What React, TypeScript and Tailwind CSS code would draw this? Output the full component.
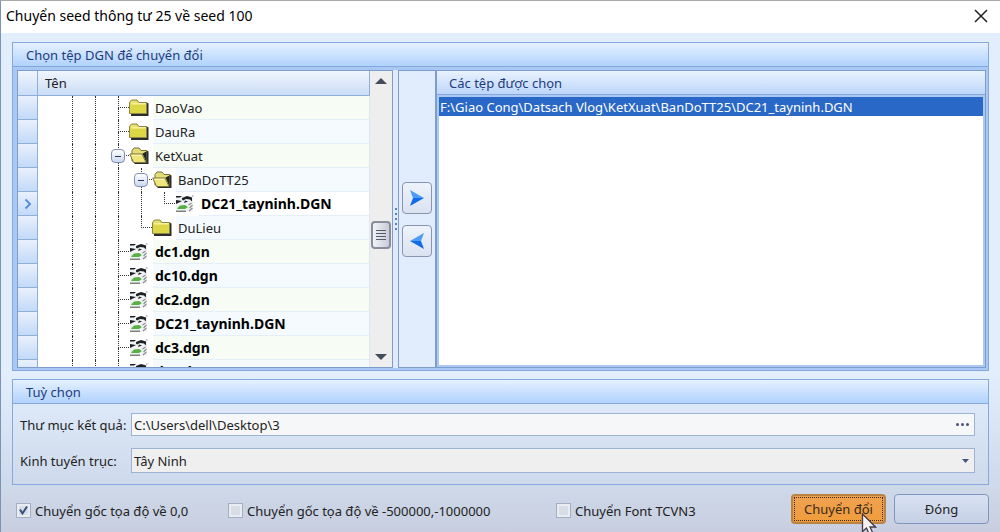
import React from 'react';

interface TreeItem {
    name: string;
    kind: 'folder' | 'open' | 'dgn';
    depth: number;
    joint: 'tee' | 'corner';
    current?: boolean;
}

const items: TreeItem[] = [
    { name: 'DaoVao', kind: 'folder', depth: 2, joint: 'tee' },
    { name: 'DauRa', kind: 'folder', depth: 2, joint: 'tee' },
    { name: 'KetXuat', kind: 'open', depth: 2, joint: 'tee' },
    { name: 'BanDoTT25', kind: 'open', depth: 3, joint: 'tee' },
    { name: 'DC21_tayninh.DGN', kind: 'dgn', depth: 4, joint: 'corner', current: true },
    { name: 'DuLieu', kind: 'folder', depth: 3, joint: 'corner' },
    { name: 'dc1.dgn', kind: 'dgn', depth: 2, joint: 'tee' },
    { name: 'dc10.dgn', kind: 'dgn', depth: 2, joint: 'tee' },
    { name: 'dc2.dgn', kind: 'dgn', depth: 2, joint: 'tee' },
    { name: 'DC21_tayninh.DGN', kind: 'dgn', depth: 2, joint: 'tee' },
    { name: 'dc3.dgn', kind: 'dgn', depth: 2, joint: 'tee' },
    { name: 'dc4.dgn', kind: 'dgn', depth: 2, joint: 'tee' },
];

const FolderIcon: React.FC = () => (
    <svg className="w-5 h-5 shrink-0" viewBox="0 0 20 20">
        <path d="M2 18h17.5V5.500L17 4v12H2z" fill="#2c2c2c" />
        <path d="M.5 15.500V4.500L2.500 2H8l2 2.500h7.500v11z" fill="#ddd645" stroke="#8c8748" />
        <path d="M2 5.800h14.500" stroke="#f7f3a8" strokeWidth="1.500" />
        <path d="M2 3.800h6" stroke="#eee9a0" />
    </svg>
);

const OpenFolderIcon: React.FC = () => (
    <svg className="w-5 h-5 shrink-0" viewBox="0 0 20 20">
        <path d="M5 18h14.500V5.500L17 4z" fill="#2c2c2c" />
        <path d="M3 15V4.500L5 2h5l2 2.500h5.500V16z" fill="#e4dc74" stroke="#77733f" />
        <path d="M13.500 7.500l4 9V5.500z" fill="#222" />
        <path d="M4.500 16.500L.8 8H13l4 8.500z" fill="#eee67a" stroke="#77733f" />
        <path d="M2.500 9.300h10" stroke="#fbf8c4" />
    </svg>
);

const DgnIcon: React.FC = () => (
    <svg className="w-5 h-5 shrink-0" viewBox="0 0 20 20">
        <path d="M1 2h17v16H1z" fill="#f1f2f3" />
        <path d="M1 2h6l-2 1.500H1zM7 4l5-2 5 1.500v4l-2-2-4-.5-3 1.500-1-1zM1 6l6 1-6 3zM10 6.500l3 1-4 1.500z" fill="#1d2126" />
        <path d="M2 14.500l3-3 5-.5 3 2-3 2H3z" fill="#57b043" />
        <path d="M1 17.200h10" stroke="#5d6a5c" strokeWidth="1.200" />
        <path d="M13.500 11l3-2M14.500 14l3-3M14 17l3.500-3M17 2h1.500" stroke="#8d8f93" strokeWidth="1.200" />
    </svg>
);

const Cursor: React.FC = () => (
    <svg className="absolute left-[68px] top-[17px] w-4 h-6 pointer-events-none" viewBox="0 0 16 24">
        <path d="M1.500 1v17.500l4-3.500 3 7 3.500-1.500-3-6.500h5.500z" fill="#f4f1f3" stroke="#443c48" strokeWidth="1.300" />
    </svg>
);

const TreeRow: React.FC<{ item: TreeItem; index: number }> = ({ item, index }) => {
    const shade = item.current ? 'bg-white' : index % 2 === 0 ? 'bg-[#f7fcf5]' : 'bg-[#f5faff]';
    return (
        <li role="treeitem" aria-selected={!!item.current} className="flex h-6 shrink-0">
            <span className="w-5 shrink-0 flex items-center justify-center border-b border-r border-[#8fafdb] bg-gradient-to-b from-[#e9f1fd] to-[#c3d9f7]">
                {item.current && (
                    <svg className="w-2 h-3" viewBox="0 0 8 12" fill="none" stroke="#5b8fd6" strokeWidth="2">
                        <path d="M1.500 1.500L6 6l-4.500 4.500" />
                    </svg>
                )}
            </span>
            <span className="w-[34px] shrink-0" />
            {Array.from({ length: item.depth }, (_, i) => (
                <span key={i} className="w-[23px] shrink-0 border-l border-dotted border-[#333]" />
            ))}
            <span className="relative w-[11px] shrink-0 flex flex-col">
                <span className="h-3 border-l border-b border-dotted border-[#333]" />
                {item.joint === 'tee' && <span className="h-3 border-l border-dotted border-[#333]" />}
                {item.kind === 'open' && (
                    <button
                        aria-label={`Thu gọn ${item.name}`}
                        className="absolute -left-[7px] top-[5px] w-[14px] h-[14px] flex items-center justify-center rounded-sm border border-[#7f8fb5] bg-gradient-to-b from-white to-[#ccd8ef]">
                        <span className="w-1.5 h-px bg-[#26365e]" />
                    </button>
                )}
            </span>
            <span className="flex items-center">
                {item.kind === 'folder' && <FolderIcon />}
                {item.kind === 'open' && <OpenFolderIcon />}
                {item.kind === 'dgn' && <DgnIcon />}
            </span>
            <span className={`flex-1 ml-1 pl-0.5 flex items-center border-b border-[#e4eff9] ${shade} ${item.kind === 'dgn' ? 'text-sm leading-4 font-bold text-black' : ''}`}>
                {item.name}
            </span>
        </li>
    );
};

const CheckOption: React.FC<{ label: string; checked?: boolean; className?: string }> = ({ label, checked, className }) => (
    <label className={`flex items-center gap-1 whitespace-nowrap ${className ?? ''}`}>
        <span className="relative flex">
            <input
                type="checkbox"
                defaultChecked={checked}
                className="peer appearance-none w-[15px] h-[15px] border border-[#a3b0c4] bg-[#d9dde6] shadow-[inset_0_0_0_2px_#e9ecf1]"
            />
            <svg className="absolute inset-0 w-[15px] h-[15px] hidden peer-checked:block pointer-events-none" viewBox="0 0 15 15" fill="none" stroke="#35507f" strokeWidth="2">
                <path d="M4 6.500l2.500 4L11 3.500" />
            </svg>
        </span>
        {label}
    </label>
);

const SectionTitle: React.FC<{ children: React.ReactNode }> = ({ children }) => (
    <h2 className="h-6 shrink-0 pl-[13px] flex items-center border-b border-[#86a8da] bg-gradient-to-b from-[#e6f1ff] to-[#b0d2fd] text-[#1d3c7c]">
        {children}
    </h2>
);

const App: React.FC = () => {
    return (
        <div className="h-screen flex flex-col overflow-hidden border-t border-l border-t-[#a9a9a9] border-l-[#7c93b5] bg-gradient-to-b from-[#e3eefd] from-70% via-[#cfdbec] via-90% to-[#c8cedf] font-['Noto_Sans','Open_Sans',sans-serif] text-[13px] leading-4 text-[#222]">
            <header className="h-8 shrink-0 flex items-center justify-between pl-[5px] pr-3 pb-0.5 bg-white">
                <h1 className="text-sm text-black">Chuyển seed thông tư 25 về seed 100</h1>
                <button aria-label="Đóng cửa sổ">
                    <svg className="w-[14px] h-[14px]" viewBox="0 0 14 14" stroke="#222" strokeWidth="1.500">
                        <path d="M1 1l12 12M13 1L1 13" />
                    </svg>
                </button>
            </header>

            <main className="flex-1 min-h-0 flex flex-col gap-2 pl-[11px] pr-[11px] pt-[9px]">
                <section className="flex-1 min-h-0 flex flex-col border border-[#86a8da] bg-[#a9c8f3]">
                    <SectionTitle>Chọn tệp DGN để chuyển đổi</SectionTitle>
                    <div className="flex-1 min-h-0 flex pt-[3px] pl-1 pr-0.5 pb-0.5">
                        <div className="w-[376px] shrink-0 min-h-0 flex border border-[#7f9dcb] bg-white">
                            <div className="flex-1 min-w-0 flex flex-col overflow-hidden">
                                <div className="h-[25px] shrink-0 flex border-b border-[#8fafdb] bg-gradient-to-b from-[#f0f5fd] to-[#cbddf7]">
                                    <span className="w-5 shrink-0 border-r border-[#8fafdb]" />
                                    <span className="flex-1 pl-[7px] flex items-center border-r border-[#8fafdb]">Tên</span>
                                </div>
                                <ul role="tree" className="flex-1 min-h-0 flex flex-col overflow-hidden border-r border-[#dfe8f0]">
                                    {items.map((item, i) => (
                                        <TreeRow key={i} item={item} index={i} />
                                    ))}
                                </ul>
                            </div>
                            <div className="w-[22px] shrink-0 flex flex-col items-center bg-[#eeeeee]">
                                <button aria-label="Cuộn lên" className="h-5 flex items-center">
                                    <svg className="w-3 h-1.5" viewBox="0 0 12 6" fill="#454c5c"><path d="M0 6l6-6 6 6z" /></svg>
                                </button>
                                <span className="grow-[4]" />
                                <span className="w-5 h-7 flex flex-col items-center justify-center gap-0.5 rounded-sm border-2 border-[#8a8d9c] bg-gradient-to-r from-[#f2f3f8] to-[#c9ccd8]">
                                    <span className="w-2.5 h-px bg-[#555b6b]" />
                                    <span className="w-2.5 h-px bg-[#555b6b]" />
                                    <span className="w-2.5 h-px bg-[#555b6b]" />
                                    <span className="w-2.5 h-px bg-[#555b6b]" />
                                </span>
                                <span className="grow-[3]" />
                                <button aria-label="Cuộn xuống" className="h-5 flex items-center">
                                    <svg className="w-3 h-1.5" viewBox="0 0 12 6" fill="#454c5c"><path d="M0 0l6 6 6-6z" /></svg>
                                </button>
                            </div>
                        </div>

                        <div className="w-[5px] shrink-0 flex flex-col items-center justify-center gap-[3px] bg-[#dfebfc]">
                            {[0, 1, 2, 3, 4].map((i) => (
                                <span key={i} className="w-0.5 h-0.5 bg-[#5c82bd]" />
                            ))}
                        </div>

                        <div className="flex-1 min-w-0 flex border border-[#7f9dcb] bg-[#e1ecfd]">
                            <div className="w-9 shrink-0 flex flex-col items-center justify-center gap-[11px]">
                                <button aria-label="Thêm tệp" className="w-[30px] h-8 flex items-center justify-center rounded-sm border border-[#8795b3] bg-gradient-to-b from-[#eef3fb] to-[#dbe2f0]">
                                    <svg className="w-4 h-4" viewBox="0 0 16 16">
                                        <path d="M1 0l14 8H4z" fill="#4d9bf5" />
                                        <path d="M15 8L1 16l3-8z" fill="#0f6be8" />
                                    </svg>
                                </button>
                                <button aria-label="Bỏ tệp" className="w-[30px] h-8 flex items-center justify-center rounded-sm border border-[#8795b3] bg-gradient-to-b from-[#eef3fb] to-[#dbe2f0]">
                                    <svg className="w-4 h-4" viewBox="0 0 16 16">
                                        <path d="M15 0L1 8h11z" fill="#4d9bf5" />
                                        <path d="M1 8l14 8-3-8z" fill="#0f6be8" />
                                    </svg>
                                </button>
                            </div>
                            <div className="flex-1 min-w-0 flex flex-col border-l-2 border-[#7f9dcb]">
                                <h3 className="h-6 shrink-0 pl-3 flex items-center border-b border-[#86a8da] bg-gradient-to-b from-[#e9f2fe] to-[#bdd6fa] text-[#1d3c7c]">
                                    Các tệp được chọn
                                </h3>
                                <div className="flex-1 flex flex-col p-0.5 bg-[#a9c8f3]">
                                    <ul role="listbox" aria-label="Các tệp được chọn" className="flex-1 bg-white">
                                        <li role="option" aria-selected="true" className="h-[19px] pl-px flex items-center bg-[#2a68c8] text-white">
                                            F:\Giao Cong\Datsach Vlog\KetXuat\BanDoTT25\DC21_tayninh.DGN
                                        </li>
                                    </ul>
                                </div>
                            </div>
                        </div>
                    </div>
                </section>

                <section className="shrink-0 border border-[#86a8da]">
                    <SectionTitle>Tuỳ chọn</SectionTitle>
                    <div className="flex flex-col gap-3 pl-[7px] pr-[13px] pt-[9px] pb-[11px]">
                        <div className="flex items-center">
                            <label htmlFor="folder" className="w-[111px] shrink-0">Thư mục kết quả:</label>
                            <div className="flex-1 h-[23px] flex border border-[#9db3d3] bg-[#f6f7f8]">
                                <input id="folder" type="text" defaultValue="C:\Users\dell\Desktop\3" className="flex-1 min-w-0 px-0.5 bg-transparent outline-none" />
                                <button aria-label="Chọn thư mục" className="w-6 flex items-center justify-center gap-0.5">
                                    <span className="w-[3px] h-[3px] rounded-full bg-[#4a5478]" />
                                    <span className="w-[3px] h-[3px] rounded-full bg-[#4a5478]" />
                                    <span className="w-[3px] h-[3px] rounded-full bg-[#4a5478]" />
                                </button>
                            </div>
                        </div>
                        <div className="flex items-center">
                            <label htmlFor="meridian" className="w-[111px] shrink-0">Kinh tuyến trục:</label>
                            <div className="relative flex-1 h-[25px] flex border border-[#9db3d3] bg-[#efefef]">
                                <select id="meridian" className="flex-1 appearance-none px-0.5 bg-transparent outline-none">
                                    <option>Tây Ninh</option>
                                </select>
                                <svg className="absolute right-[5px] top-2.5 w-[7px] h-1 pointer-events-none" viewBox="0 0 7 4" fill="#45557f"><path d="M0 0h7L3.500 4z" /></svg>
                            </div>
                        </div>
                    </div>
                </section>
            </main>

            <footer className="h-[47px] shrink-0 flex items-center pl-[15px] pr-[11px]">
                <CheckOption label="Chuyển gốc tọa độ về 0,0" checked className="w-[212px] pt-1" />
                <CheckOption label="Chuyển gốc tọa độ về -500000,-1000000" className="w-[328px] pt-1" />
                <CheckOption label="Chuyển Font TCVN3" className="pt-1" />
                <div className="ml-auto flex gap-2">
                    <button className="relative w-[95px] h-[30px] rounded-sm border-2 border-[#b98442] bg-gradient-to-b from-[#f0a250] to-[#f09c3c] text-[#3a2a1a]">
                        <span className="absolute inset-px border border-dotted border-[#3a2a1a]" />
                        Chuyển đổi
                        <Cursor />
                    </button>
                    <button className="w-[95px] h-[30px] rounded-sm border border-[#7f97c0] bg-gradient-to-b from-[#d9e2f2] to-[#c5d0e6]">
                        Đóng
                    </button>
                </div>
            </footer>
        </div>
    );
};

export default App;
